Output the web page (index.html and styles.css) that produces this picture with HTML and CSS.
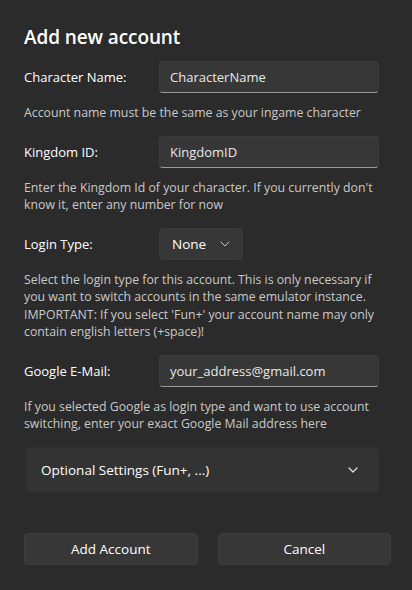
FILE: index.html
```html
<!DOCTYPE html>
<html lang="en">
<head>
<meta charset="utf-8">
<title>Add new account</title>
<link rel="stylesheet" href="styles.css">
</head>
<body>
<div class="dialog">
  <h1 class="title">Add new account</h1>

  <div class="field">
    <label class="label">Character Name:</label>
    <div class="input">CharacterName</div>
  </div>
  <p class="desc">Account name must be the same as your ingame character</p>

  <div class="field">
    <label class="label">Kingdom ID:</label>
    <div class="input">KingdomID</div>
  </div>
  <p class="desc">Enter the Kingdom Id of your character. If you currently don't know it, enter any number for now</p>

  <div class="field">
    <label class="label">Login Type:</label>
    <div class="combo">
      <span>None</span>
      <svg class="chev" width="10" height="6" viewBox="0 0 10 6"><path d="M1 1 L5 5 L9 1" fill="none" stroke="#cfcfcf" stroke-width="1" stroke-linecap="round" stroke-linejoin="round"/></svg>
    </div>
  </div>
  <p class="desc">Select the login type for this account. This is only necessary if you want to switch accounts in the same emulator instance. IMPORTANT: If you select 'Fun+' your account name may only contain english letters (+space)!</p>

  <div class="field">
    <label class="label">Google E-Mail:</label>
    <div class="input">your_address@gmail.com</div>
  </div>
  <p class="desc">If you selected Google as login type and want to use account switching, enter your exact Google Mail address here</p>

  <div class="expander">
    <span>Optional Settings (Fun+, ...)</span>
    <svg class="chev" width="10" height="6" viewBox="0 0 10 6"><path d="M1 1 L5 5 L9 1" fill="none" stroke="#e0e0e0" stroke-width="1.2" stroke-linecap="round" stroke-linejoin="round"/></svg>
  </div>

  <div class="buttons">
    <button class="btn">Add Account</button>
    <button class="btn">Cancel</button>
  </div>
</div>
</body>
</html>
```
FILE: styles.css
```css
html, body {
  margin: 0;
  padding: 0;
  background: #2b2b2b;
}
body {
  font-family: "Open Sans", "Noto Sans", sans-serif;
  color: #ffffff;
  width: 412px;
  height: 590px;
  overflow: hidden;
}
.dialog {
  padding: 23px 21px 0 24px;
  display: flex;
  flex-direction: column;
}
.title {
  margin: 0 0 10px 0;
  font-size: 19px;
  font-weight: 600;
  line-height: 28px;
  letter-spacing: -0.1px;
}
.field {
  display: flex;
  align-items: center;
  height: 32px;
}
.label {
  width: 135px;
  flex: none;
  font-size: 13px;
  color: #ffffff;
}
.input {
  box-sizing: border-box;
  width: 220px;
  height: 32px;
  background: #373737;
  border: 1px solid #3c3c3c;
  border-bottom: 1px solid #9a9a9a;
  border-radius: 4px;
  padding: 0 10px;
  display: flex;
  align-items: center;
  font-size: 13px;
  color: #e8e8e8;
}
.combo {
  box-sizing: border-box;
  width: 84px;
  height: 32px;
  background: #373737;
  border: 1px solid #3a3a3a;
  border-radius: 4px;
  display: flex;
  align-items: center;
  padding: 0 12px;
  gap: 14px;
  font-size: 13.5px;
}
.desc {
  margin: 11px 0 14px 0;
  font-size: 12.3px;
  line-height: 17.55px;
  color: #c9c9c9;
  width: 358px;
}
.expander {
  box-sizing: border-box;
  margin: 0 12px 0 1px;
  height: 46px;
  background: #333333;
  border: 1px solid #2f2f2f;
  border-radius: 4px;
  display: flex;
  align-items: center;
  justify-content: space-between;
  padding: 0 20px 0 15px;
  font-size: 13.5px;
}
.buttons {
  margin-top: 40px;
  display: flex;
  gap: 20px;
}
.btn {
  box-sizing: border-box;
  flex: 1;
  height: 32px;
  background: #373737;
  border: 1px solid #3e3e3e;
  border-radius: 4px;
  color: #ffffff;
  font-family: "Open Sans", "Noto Sans", sans-serif;
  font-size: 13.5px;
  padding: 0;
}
```
